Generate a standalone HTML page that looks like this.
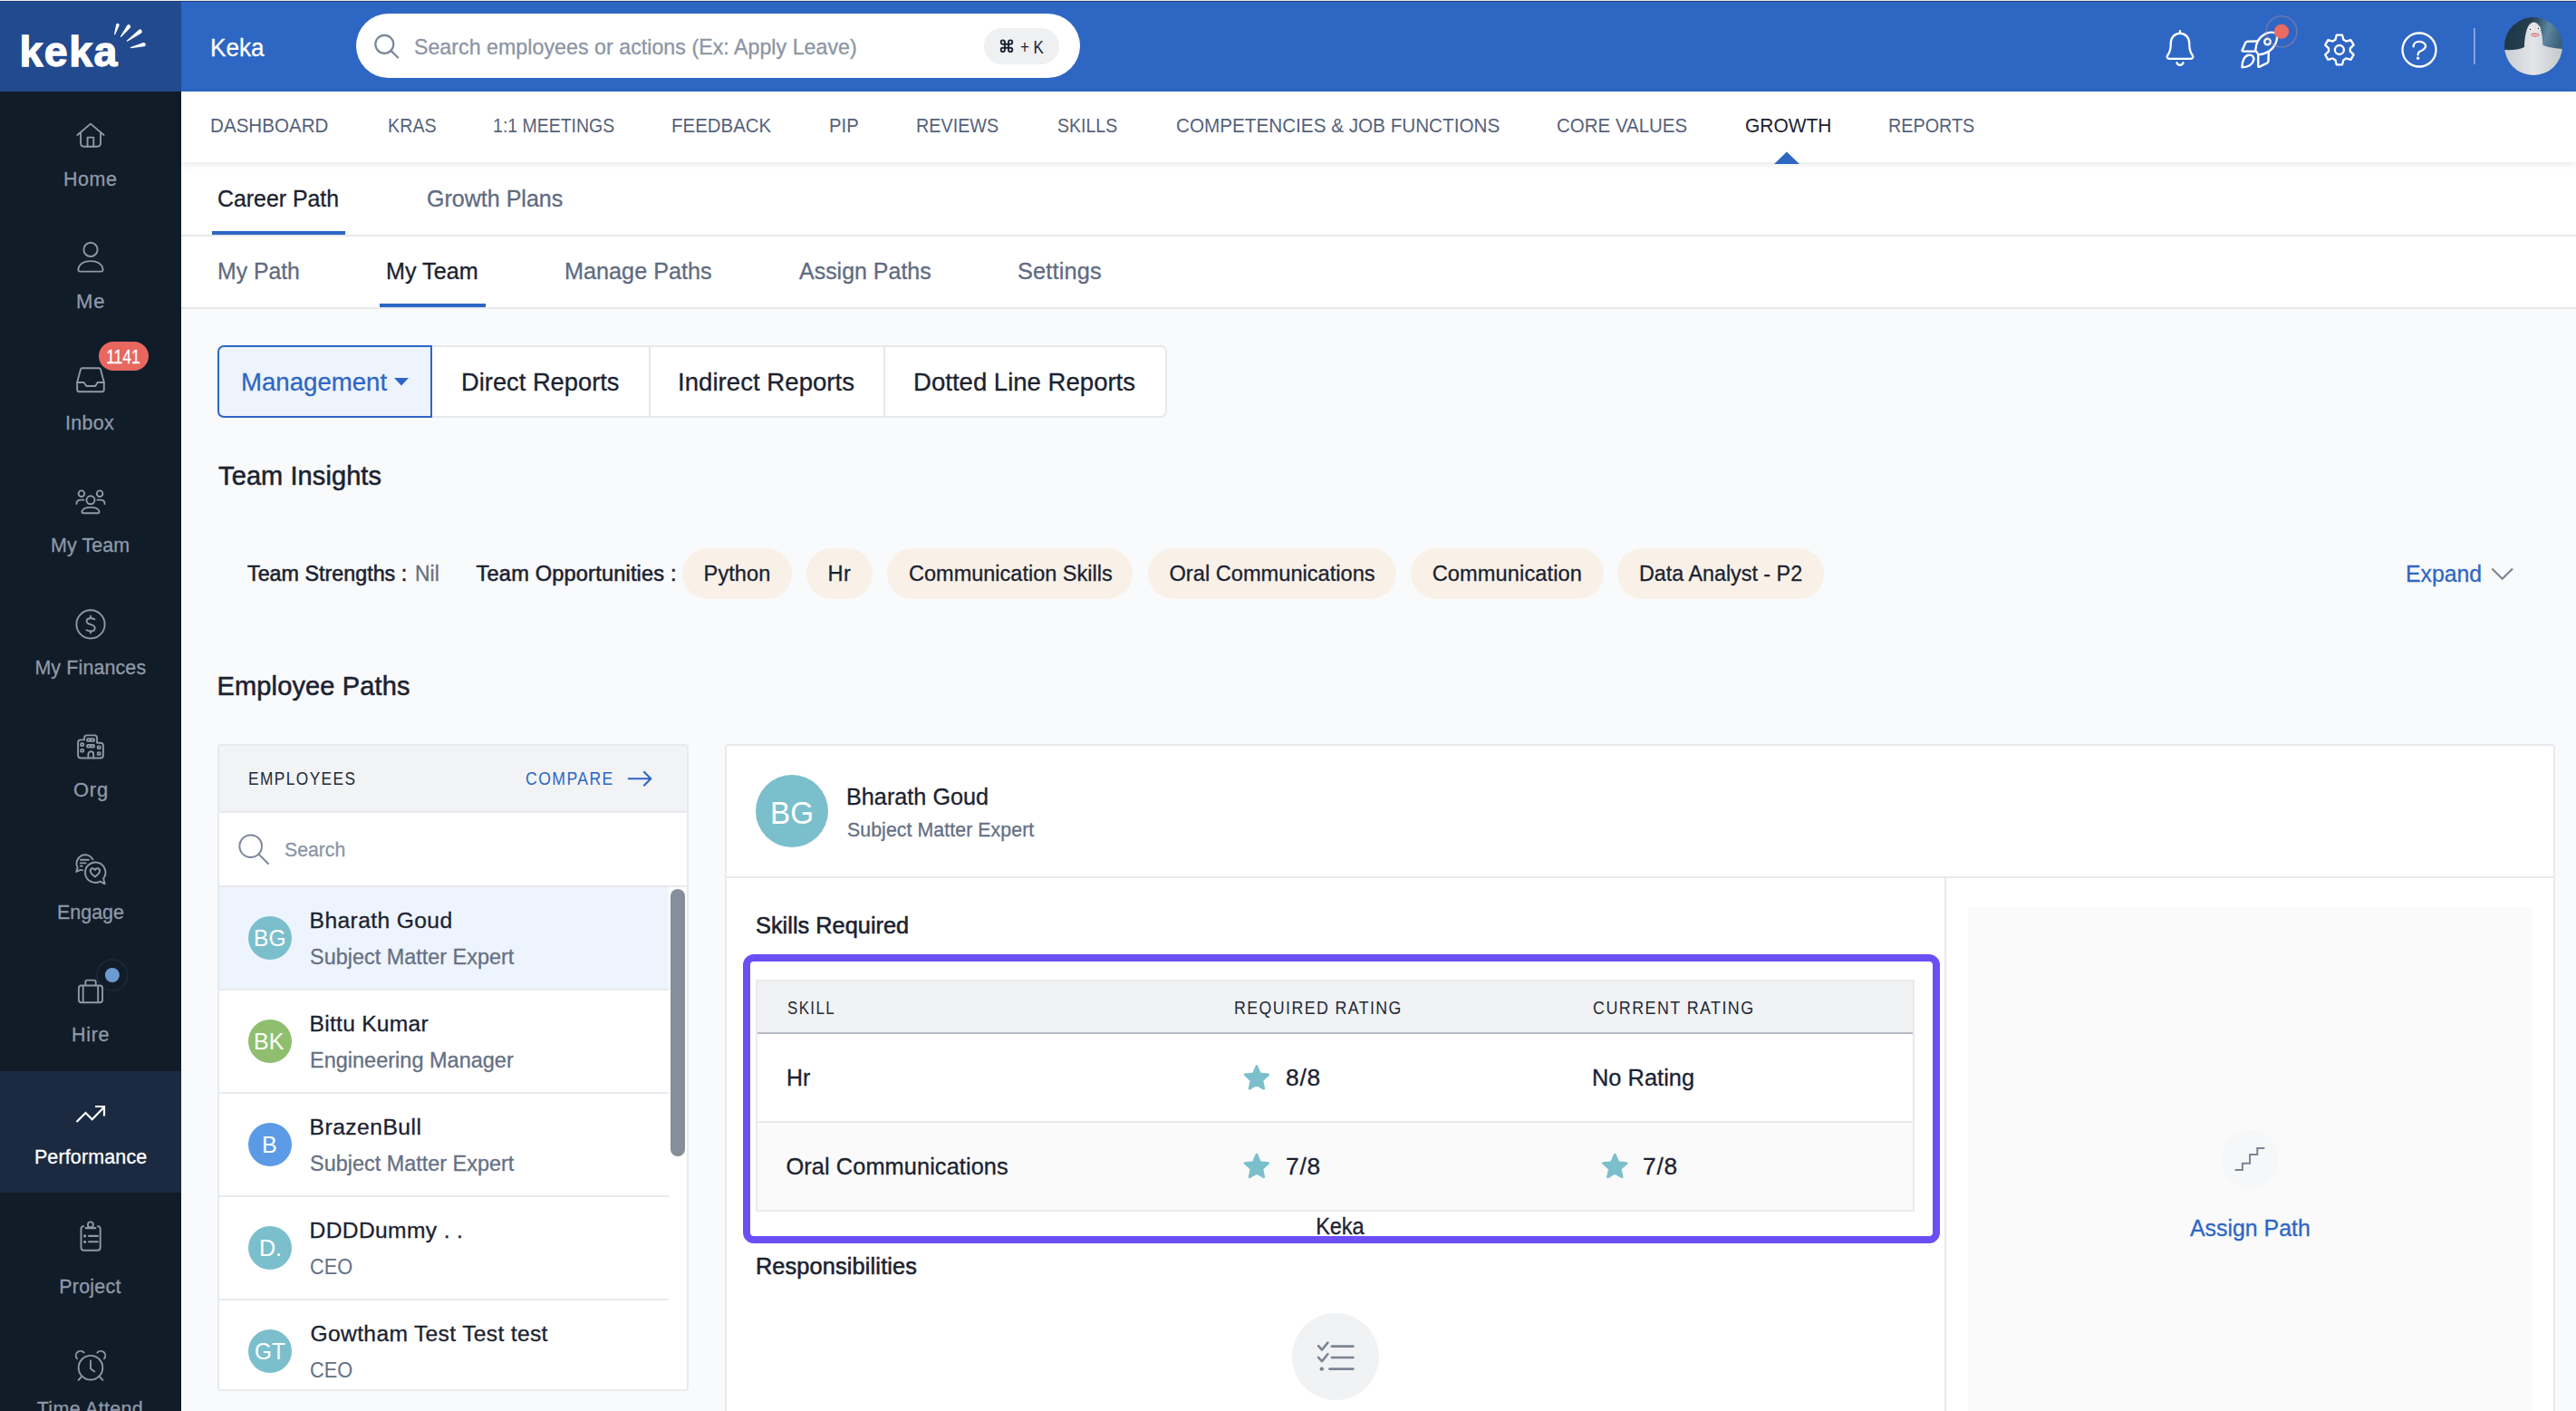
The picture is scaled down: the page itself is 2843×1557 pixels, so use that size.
<!DOCTYPE html>
<html><head><meta charset="utf-8">
<style>
*{box-sizing:border-box;margin:0;padding:0}
html,body{width:2843px;height:1557px;overflow:hidden;background:#f9fafb;font-family:"Liberation Sans",sans-serif;position:relative}
.a{position:absolute}
.t{position:absolute;white-space:nowrap;font-family:"Liberation Sans",sans-serif;-webkit-text-stroke:0.3px currentColor}
.sb{-webkit-text-stroke:0.55px currentColor}
.ns{-webkit-text-stroke:0}
svg{position:absolute;overflow:visible}
</style></head><body>
<!-- top bar -->
<div class="a" style="left:0;top:0;width:200px;height:101px;background:#214a8f"></div>
<div class="a" style="left:200px;top:0;width:2643px;height:101px;background:#2e66c4"></div>
<div class="a" style="left:0;top:0;width:2843px;height:1px;background:#eeece6"></div>
<div class="a" style="left:0;top:1px;width:2843px;height:1px;background:#163d84"></div>
<div class="a" style="left:393px;top:15px;width:799px;height:71px;background:#fff;border-radius:36px"></div>
<div class="a" style="left:1086px;top:31px;width:83px;height:40px;background:#eff0f2;border-radius:20px"></div>
<!-- sidebar -->
<div class="a" style="left:0;top:101px;width:200px;height:1456px;background:#111c29"></div>
<div class="a" style="left:0;top:1182px;width:200px;height:134px;background:#1b2a40"></div>
<!-- nav -->
<div class="a" style="left:200px;top:179px;width:2643px;height:162px;background:#fff"></div>
<div class="a" style="left:200px;top:101px;width:2643px;height:78px;background:#fff;box-shadow:0 2px 8px rgba(0,0,0,0.10)"></div>
<div class="a" style="left:200px;top:259px;width:2643px;height:2px;background:#e7e9ec"></div>
<div class="a" style="left:200px;top:339px;width:2643px;height:2px;background:#e7e9ec"></div>
<div class="a" style="left:234px;top:255px;width:147px;height:4px;background:#2e66c4"></div>
<div class="a" style="left:419px;top:335px;width:117px;height:4px;background:#2e66c4"></div>
<svg style="left:1958px;top:167px" width="28" height="14"><path d="M0 14 L14 0.5 L28 14Z" fill="#2e66c4"/></svg>
<!-- button group -->
<div class="a" style="left:240px;top:381px;width:1048px;height:80px;background:#fff;border:2px solid #e6e8eb;border-radius:7px"></div>
<div class="a" style="left:716px;top:383px;width:2px;height:76px;background:#e6e8eb"></div>
<div class="a" style="left:975px;top:383px;width:2px;height:76px;background:#e6e8eb"></div>
<div class="a" style="left:240px;top:381px;width:237px;height:80px;background:#eef4fc;border:2px solid #2e66c4;border-radius:7px 0 0 7px"></div>
<svg style="left:435px;top:417px" width="16" height="9"><path d="M0 0 L16 0 L8 8.5Z" fill="#2e66c4"/></svg>
<!-- pills -->
<div class="a" style="left:753px;top:605px;width:121px;height:56px;background:#f9f1e8;border-radius:28px"></div>
<div class="a" style="left:890px;top:605px;width:73px;height:56px;background:#f9f1e8;border-radius:28px"></div>
<div class="a" style="left:979px;top:605px;width:271px;height:56px;background:#f9f1e8;border-radius:28px"></div>
<div class="a" style="left:1267px;top:605px;width:274px;height:56px;background:#f9f1e8;border-radius:28px"></div>
<div class="a" style="left:1557px;top:605px;width:213px;height:56px;background:#f9f1e8;border-radius:28px"></div>
<div class="a" style="left:1785px;top:605px;width:228px;height:56px;background:#f9f1e8;border-radius:28px"></div>
<svg style="left:2749px;top:625px" width="26" height="16"><path d="M1.3 2.5 L12.7 13.7 L24 2.5" fill="none" stroke="#7a8494" stroke-width="2.2"/></svg>
<!-- employees panel -->
<div class="a" style="left:240px;top:821px;width:520px;height:714px;background:#fff;border:2px solid #e8eaed;border-radius:4px;overflow:hidden">
  <div class="a" style="left:0;top:0;width:516px;height:74px;background:#f2f3f5;border-bottom:2px solid #e8eaed"></div>
  <div class="a" style="left:0;top:154px;width:516px;height:2px;background:#e8eaed"></div>
  <div class="a" style="left:0;top:156px;width:496px;height:112px;background:#eef4fd"></div>
  <div class="a" style="left:0;top:268px;width:496px;height:2px;background:#e8eaed"></div>
  <div class="a" style="left:0;top:382px;width:496px;height:2px;background:#e8eaed"></div>
  <div class="a" style="left:0;top:496px;width:496px;height:2px;background:#e8eaed"></div>
  <div class="a" style="left:0;top:610px;width:496px;height:2px;background:#e8eaed"></div>
  <div class="a" style="left:498px;top:158px;width:16px;height:295px;background:#868e9a;border-radius:8px"></div>
</div>
<div class="a" style="left:274px;top:1011px;width:48px;height:48px;border-radius:50%;background:#7bbfcc"></div>
<div class="a" style="left:274px;top:1125px;width:48px;height:48px;border-radius:50%;background:#8fbf6e"></div>
<div class="a" style="left:274px;top:1239px;width:48px;height:48px;border-radius:50%;background:#5b9be6"></div>
<div class="a" style="left:274px;top:1353px;width:48px;height:48px;border-radius:50%;background:#7bbfcc"></div>
<div class="a" style="left:274px;top:1467px;width:48px;height:48px;border-radius:50%;background:#7bbfcc"></div>
<!-- detail panel -->
<div class="a" style="left:800px;top:821px;width:2020px;height:760px;background:#fff;border:2px solid #e8eaed;border-radius:4px"></div>
<div class="a" style="left:802px;top:967px;width:2016px;height:2px;background:#e8eaed"></div>
<div class="a" style="left:2146px;top:969px;width:2px;height:600px;background:#e8eaed"></div>
<div class="a" style="left:2172px;top:1001px;width:622px;height:600px;background:#fafafb"></div>
<div class="a" style="left:2451px;top:1247px;width:64px;height:64px;border-radius:50%;background:#f6f7f9"></div>
<div class="a" style="left:834px;top:855px;width:80px;height:80px;border-radius:50%;background:#7bbfcc"></div>
<!-- table -->
<div class="a" style="left:834px;top:1081px;width:1279px;height:256px;background:#fff;border:2px solid #e8eaed"></div>
<div class="a" style="left:836px;top:1083px;width:1275px;height:58px;background:#f1f2f4;border-bottom:2px solid #b5bac4"></div>
<div class="a" style="left:836px;top:1237px;width:1275px;height:2px;background:#e8eaed"></div>
<div class="a" style="left:836px;top:1239px;width:1275px;height:96px;background:#fafafb"></div>
<div class="a" style="left:820px;top:1053px;width:1321px;height:319px;border:8px solid #6b4ff5;border-radius:12px"></div>
<div class="a" style="left:1426px;top:1449px;width:96px;height:96px;border-radius:50%;background:#f1f2f4"></div>
<svg style="left:0;top:0" width="2843" height="1557" viewBox="0 0 2843 1557">
<!-- logo swooshes -->
<g fill="#fff">
<path d="M127.17 38.08 L131.61 28.15 A1.80 1.80 0 0 0 128.19 27.05 L126.03 37.72 A0.60 0.60 0 0 0 127.17 38.08Z"/>
<path d="M133.87 40.67 L143.73 30.66 A2.20 2.20 0 0 0 140.27 27.94 L132.93 39.93 A0.60 0.60 0 0 0 133.87 40.67Z"/>
<path d="M140.65 45.68 L155.86 36.66 A2.30 2.30 0 0 0 153.14 32.94 L139.95 44.72 A0.60 0.60 0 0 0 140.65 45.68Z"/>
<path d="M144.44 53.18 L159.11 51.34 A2.20 2.20 0 0 0 158.09 47.06 L144.16 52.02 A0.60 0.60 0 0 0 144.44 53.18Z"/>
</g>
<!-- top search icon -->
<g fill="none" stroke="#7d8797" stroke-width="2.2" stroke-linecap="round">
<circle cx="424.3" cy="48.8" r="10"/>
<path d="M431.6 56.1 L439.2 63.5"/>
</g>
<!-- cmd symbol -->
<path d="M1106.85 48.7 H1115.15 M1106.85 52.8 H1115.15 M1109.0 46.550000000000004 V54.949999999999996 M1113.0 46.550000000000004 V54.949999999999996 M1109.0 46.550000000000004 A2.15 2.15 0 1 0 1106.85 48.7 M1113.0 46.550000000000004 A2.15 2.15 0 1 1 1115.15 48.7 M1109.0 54.949999999999996 A2.15 2.15 0 1 1 1106.85 52.8 M1113.0 54.949999999999996 A2.15 2.15 0 1 0 1115.15 52.8" fill="none" stroke="#1b2230" stroke-width="1.9"/>
<!-- bell -->
<g fill="none" stroke="#fff" stroke-width="2.3" stroke-linejoin="round" stroke-linecap="round" transform="translate(0 0.7)">
<path d="M2406 33.5 V36.2"/>
<path d="M2394.5 64.2 H2417.5 C2420.2 64.2 2421.2 62 2419.6 60 C2417 56.8 2416.2 53.5 2416.2 47 C2416.2 40.5 2411.8 36.2 2406 36.2 C2400.2 36.2 2395.8 40.5 2395.8 47 C2395.8 53.5 2395 56.8 2392.4 60 C2390.8 62 2391.8 64.2 2394.5 64.2Z"/>
<path d="M2402.5 68.5 C2404 72 2408 72 2409.5 68.5"/>
</g>
<!-- rocket -->
<g transform="translate(2465 15)" fill="none" stroke="#fff" stroke-width="2.4" stroke-linejoin="round" stroke-linecap="round">
<path d="M24.2 40.6 C24.6 33 28.2 26.2 34.6 22.6 C39 20.3 44 20.1 47.6 22.2 C48.9 26.6 47.6 33 43.6 37.6 C40.2 41.6 34.2 44.6 27.6 45.4 L24.2 40.6Z"/>
<circle cx="37.5" cy="31.1" r="3.3"/>
<path d="M25.6 30.5 L15.6 30.7 Q13.9 30.9 13.1 32.4 L9.6 40.4 Q9.4 41.5 10.6 41.5 L22.6 41.7"/>
<path d="M38.8 42.6 L38.5 52.4 Q38.3 53.9 37 54.6 L28.4 58.8 Q27.3 59.2 27.3 58 L27.2 45.6"/>
<path d="M9.5 59.2 C9.4 52.8 11.8 46.6 16.6 45.7 C20.6 45 23.2 48 22.2 51.5 C20.7 56.8 15.3 59.2 9.5 59.2Z"/>
</g>
<circle cx="2518" cy="34.8" r="17" fill="none" stroke="#b8899a" stroke-opacity="0.45" stroke-width="1.6"/>
<circle cx="2518" cy="34.8" r="8.1" fill="#e96b63"/>
<!-- gear -->
<g fill="none" stroke="#fff" stroke-width="2.3" stroke-linejoin="round">
<path d="M2577.40 43.87 L2578.73 38.70 L2585.07 38.70 L2586.40 43.87 L2589.29 45.54 L2594.43 44.11 L2597.60 49.60 L2593.78 53.33 L2593.78 56.67 L2597.60 60.40 L2594.43 65.89 L2589.29 64.46 L2586.40 66.13 L2585.07 71.30 L2578.73 71.30 L2577.40 66.13 L2574.51 64.46 L2569.37 65.89 L2566.20 60.40 L2570.02 56.67 L2570.02 53.33 L2566.20 49.60 L2569.37 44.11 L2574.51 45.54Z"/>
<circle cx="2581.9" cy="55" r="5"/>
</g>
<!-- help -->
<g fill="none" stroke="#fff" stroke-width="2.3" stroke-linecap="round">
<circle cx="2670" cy="55" r="18.5"/>
<path d="M2663.6 51.4 C2663.6 47.9 2666.5 45.8 2670 45.8 C2674 45.8 2677 48.2 2677 51 C2677 54.4 2673.2 55.5 2670.6 56.8 C2669.1 57.6 2668.6 58.6 2668.6 60.4"/>
</g>
<circle cx="2668.6" cy="64.2" r="1.7" fill="#fff"/>
<rect x="2730" y="31" width="1.6" height="40" fill="#fff" fill-opacity="0.5"/>
<!-- sidebar icons -->
<g fill="none" stroke="#8e98a7" stroke-width="1.9" stroke-linejoin="round" stroke-linecap="round">
<!-- home -->
<path d="M85.4 149 L100 136.6 L114.6 149"/>
<path d="M89.1 146.6 V158 Q89.1 161.7 92.8 161.7 H107.3 Q111 161.7 111 158 V146.6"/>
<path d="M96.6 161.7 V151.6 H103.3 V161.7"/>
<!-- me -->
<circle cx="100" cy="275.4" r="7.6"/>
<path d="M88.5 299.6 H111.5 Q114 299.6 113.6 297 C112.6 291.7 107.8 288.1 100 288.1 C92.2 288.1 87.4 291.7 86.4 297 Q86 299.6 88.5 299.6Z"/>
<!-- inbox -->
<path d="M85.2 421.8 L89 407.6 Q89.4 406.2 90.8 406.2 H109.2 Q110.6 406.2 111 407.6 L114.8 421.8 V430 Q114.8 432.3 112.5 432.3 H87.5 Q85.2 432.3 85.2 430 Z"/>
<path d="M85.2 422 H92.6 L95.3 426 H105.3 L107.6 422 H114.8"/>
<!-- my team -->
<circle cx="100" cy="551.8" r="4.5"/>
<path d="M92.3 566.2 H107.7 Q109.9 566.2 109.5 564.3 C108.8 561.4 105.5 559.9 100 559.9 C94.5 559.9 91.2 561.4 90.5 564.3 Q90.1 566.2 92.3 566.2Z"/>
<circle cx="89.9" cy="544.7" r="3.3"/>
<circle cx="110.1" cy="544.7" r="3.3"/>
<path d="M92.6 551.6 H89.4 C86.2 551.6 84.4 553.4 84.4 556"/>
<path d="M107.4 551.6 H110.6 C113.8 551.6 115.6 553.4 115.6 556"/>
<!-- finances -->
<circle cx="100" cy="688.9" r="15.6"/>
<path d="M104.3 683.4 C103.1 682.6 101.7 682.3 100.2 682.3 C97.5 682.3 95.6 683.7 95.6 685.8 C95.6 690.1 104.7 688 104.7 692.9 C104.7 695.2 102.8 696.5 100 696.5 C98.2 696.5 96.7 696 95.5 695.2"/>
<path d="M100 679.6 V682.3 M100 696.5 V698.6"/>
<!-- org -->
<path d="M86.1 819.5 Q86.1 816.4 89.2 816.4 H93 V814.4 Q93 811.4 96.1 811.4 H104 Q107.1 811.4 107.1 814.4 V819.8 H110.8 Q113.9 819.8 113.9 822.9 V833.4 Q113.9 836.5 110.8 836.5 H89.2 Q86.1 836.5 86.1 833.4 Z"/>
<path d="M97.4 836.4 V832.2 A2.9 2.9 0 0 1 103.2 832.2 V836.4"/>
</g>
<g fill="#8e98a7">
<rect x="88.3" y="819.3" width="4.8" height="4.6" rx="1.6"/>
<rect x="88.3" y="826" width="4.8" height="4.6" rx="1.6"/>
<rect x="95.2" y="814.2" width="9.7" height="4.6" rx="1.6"/>
<rect x="95.2" y="820.9" width="9.7" height="4.6" rx="1.6"/>
<rect x="106.8" y="822.5" width="4.8" height="4.6" rx="1.6"/>
<rect x="106.8" y="829.2" width="4.8" height="4.6" rx="1.6"/>
</g>
<g fill="#111c29">
<circle cx="90.7" cy="821.6" r="0.7"/><circle cx="90.7" cy="828.3" r="0.7"/>
<circle cx="98" cy="816.5" r="0.7"/><circle cx="102" cy="816.5" r="0.7"/>
<circle cx="98" cy="823.2" r="0.7"/><circle cx="102" cy="823.2" r="0.7"/>
<circle cx="109.2" cy="824.8" r="0.7"/><circle cx="109.2" cy="831.5" r="0.7"/>
</g>
<circle cx="123.9" cy="1076" r="17" fill="none" stroke="#1a293b" stroke-width="1.6"/>
<g fill="none" stroke="#8e98a7" stroke-width="1.9" stroke-linejoin="round" stroke-linecap="round">
<!-- engage -->
<path d="M102.4 948.3 A9.4 9.4 0 0 0 85.6 957.4 L84.2 962 L88.8 959.9 L91.2 960.4"/>
<path d="M88.9 948.8 H97.8 M88.8 952.4 H94.6 M88.8 955.6 H90.8"/>
<path d="M110.5 972.6 A11.2 11.2 0 1 1 114.2 969.4 L115.6 975.4 Z"/>
<path d="M104.9 967.6 C102.3 965.7 99.7 963.6 99.7 961.1 C99.7 959.2 101 958.3 102.3 958.3 C103.6 958.3 104.4 959.2 104.9 960 C105.4 959.2 106.2 958.3 107.5 958.3 C108.8 958.3 110.1 959.2 110.1 961.1 C110.1 963.6 107.5 965.7 104.9 967.6Z"/>
<!-- hire -->
<rect x="86.9" y="1087.5" width="26.2" height="18.8" rx="3"/>
<path d="M94.3 1087.2 V1083.6 Q94.3 1081.6 96.3 1081.6 H103.7 Q105.7 1081.6 105.7 1083.6 V1087.2"/>
<path d="M91.7 1088 V1106 M108.2 1088 V1106"/>
</g>
<circle cx="123.9" cy="1076" r="8" fill="#6b9bd0"/>
<!-- performance -->
<path d="M84.5 1238 L94.5 1228 L101.7 1235.2 L115 1221.6 M105.1 1221 H115 V1231.4" fill="none" stroke="#fff" stroke-width="2.2" stroke-linejoin="miter"/>
<g fill="none" stroke="#8e98a7" stroke-width="1.9" stroke-linejoin="round" stroke-linecap="round">
<!-- project -->
<path d="M92.3 1353.1 H92 Q89.5 1353.1 89.5 1356 V1376.5 Q89.5 1379.8 92.8 1379.8 H107.4 Q110.7 1379.8 110.7 1376.5 V1356 Q110.7 1353.1 108 1353.1 H107.8"/>
<circle cx="99.9" cy="1351.4" r="3"/>
<path d="M94.6 1355.1 H105.4" stroke-width="2.1"/>
<path d="M98.1 1363.9 H107.9 M98.1 1370.3 H107.9" stroke-width="2.1"/>
<!-- time -->
<circle cx="100" cy="1509.2" r="13.3"/>
<path d="M100 1501.4 V1510.2 L104.2 1513.4"/>
<path d="M85 1499.2 A5 5 0 0 1 92.7 1492.6"/>
<path d="M115 1499.2 A5 5 0 0 0 107.3 1492.6"/>
<path d="M86.6 1522.8 L89.7 1519.5 M113.4 1522.8 L110.3 1519.5"/>
</g>
<g fill="#8e98a7"><circle cx="93.6" cy="1363.9" r="1.6"/><circle cx="93.6" cy="1370.3" r="1.6"/></g>
<!-- employees search icon -->
<g fill="none" stroke="#7d8797" stroke-width="2" stroke-linecap="round">
<circle cx="276.7" cy="933.7" r="12.3"/>
<path d="M285.6 942.6 L296 953"/>
</g>
<!-- compare arrow -->
<path d="M692.9 859.2 H718 M710.3 851.2 L718.3 859.2 L710.3 867.2" fill="none" stroke="#2e66c4" stroke-width="2.1" stroke-linecap="butt" stroke-linejoin="miter"/>
<!-- stars -->
<g fill="#7bbfcc" stroke="#7bbfcc" stroke-width="2.6" stroke-linejoin="round">
<path transform="translate(1371.9 1174)" d="M15.00 2.40 L18.70 10.90 L27.90 11.90 L21.00 18.20 L22.90 27.30 L15.00 22.70 L7.10 27.30 L9.00 18.20 L2.10 11.90 L11.30 10.90Z"/>
<path transform="translate(1371.9 1271.6)" d="M15.00 2.40 L18.70 10.90 L27.90 11.90 L21.00 18.20 L22.90 27.30 L15.00 22.70 L7.10 27.30 L9.00 18.20 L2.10 11.90 L11.30 10.90Z"/>
<path transform="translate(1767.3 1271.6)" d="M15.00 2.40 L18.70 10.90 L27.90 11.90 L21.00 18.20 L22.90 27.30 L15.00 22.70 L7.10 27.30 L9.00 18.20 L2.10 11.90 L11.30 10.90Z"/>
</g>
<!-- stairs -->
<path d="M2466.7 1291 H2474.9 V1283.7 H2483.1 V1274 H2491.3 V1266.9 H2499.3" fill="none" stroke="#7a8494" stroke-width="2" stroke-linecap="butt"/>
<!-- list -->
<g fill="none" stroke="#7a8494" stroke-width="2.6" stroke-linecap="round" stroke-linejoin="round">
<path d="M1455 1485.2 L1459 1489.5 L1465.4 1481.6"/>
<path d="M1455 1497.8 L1459 1502.1 L1465.4 1494.2"/>
<path d="M1469.8 1485.6 H1493.4 M1469.8 1498 H1493.4 M1467.4 1510.6 H1493.4"/>
</g>
<circle cx="1458.8" cy="1510.6" r="2.2" fill="#7a8494"/>
</svg>
<!-- avatar -->
<svg style="left:2764px;top:19px" width="64" height="64" viewBox="2764 19 64 64">
<defs><clipPath id="avc"><circle cx="2796" cy="51" r="32"/></clipPath>
<linearGradient id="avbg" x1="0" y1="0" x2="1" y2="0.3"><stop offset="0" stop-color="#1d3443"/><stop offset="0.45" stop-color="#24404f"/><stop offset="0.75" stop-color="#5d86a0"/><stop offset="1" stop-color="#3b6076"/></linearGradient>
<linearGradient id="avgh" x1="0" y1="0" x2="1" y2="0"><stop offset="0" stop-color="#c9cdd1"/><stop offset="0.5" stop-color="#e3e5e8"/><stop offset="1" stop-color="#c3c8cc"/></linearGradient></defs>
<g clip-path="url(#avc)">
<rect x="2764" y="19" width="64" height="64" fill="url(#avbg)"/>
<path d="M2786 52 C2786.5 38 2789 25 2796.5 24.5 C2804 25 2806 38 2806.5 50 C2814 53 2822 53.5 2829 54 L2829 84 L2763 84 L2763 55 C2772 55.5 2780 55 2786 52Z" fill="url(#avgh)"/>
<circle cx="2792.7" cy="32.1" r="2.1" fill="#fff"/><circle cx="2801.6" cy="31.1" r="2.1" fill="#fff"/>
<circle cx="2792.5" cy="32.4" r="0.8" fill="#222"/><circle cx="2801.4" cy="31.4" r="0.8" fill="#222"/>
<ellipse cx="2797.8" cy="38.6" rx="4.5" ry="2.2" fill="#c97d80"/>
<rect x="2794.5" y="38.2" width="6.6" height="1.2" fill="#f3e6e6"/>
</g>
</svg>
<!-- logo text -->
<div class="t" style="left:21.5px;top:34px;font-size:46.5px;line-height:46.5px;font-weight:700;color:#fff;letter-spacing:1.5px;-webkit-text-stroke:1.3px #fff">keka</div>
<!-- badge -->
<div class="a" style="left:109px;top:377px;width:55px;height:32px;border-radius:16px;background:#e8675f"></div>

<div class="t" style="left:231.7px;top:39.5px;font-size:26.81px;line-height:26.81px;letter-spacing:0.000px;transform:scaleX(0.9751);transform-origin:2.0px 0;color:#ffffff;">Keka</div>
<div class="t" style="left:456.9px;top:41.1px;font-size:23.19px;line-height:23.19px;letter-spacing:0.038px;color:#8c95a5;">Search employees or actions (Ex: Apply Leave)</div>
<div class="t ns" style="left:1126.0px;top:41.7px;font-size:20.29px;line-height:20.29px;letter-spacing:0.000px;transform:scaleX(0.8327);transform-origin:0.0px 0;color:#1b2230;">+ K</div>
<div class="t ns" style="left:232.4px;top:128.9px;font-size:21.30px;line-height:21.30px;letter-spacing:0.000px;transform:scaleX(0.9669);transform-origin:1.0px 0;color:#56627a;">DASHBOARD</div>
<div class="t ns" style="left:427.9px;top:128.9px;font-size:21.30px;line-height:21.30px;letter-spacing:0.000px;transform:scaleX(0.9227);transform-origin:1.0px 0;color:#56627a;">KRAS</div>
<div class="t ns" style="left:544.0px;top:128.9px;font-size:21.30px;line-height:21.30px;letter-spacing:0.000px;transform:scaleX(0.9138);transform-origin:1.0px 0;color:#56627a;">1:1 MEETINGS</div>
<div class="t ns" style="left:741.0px;top:128.9px;font-size:21.30px;line-height:21.30px;letter-spacing:0.000px;transform:scaleX(0.9596);transform-origin:1.0px 0;color:#56627a;">FEEDBACK</div>
<div class="t ns" style="left:914.5px;top:128.9px;font-size:21.30px;line-height:21.30px;letter-spacing:0.000px;transform:scaleX(0.9510);transform-origin:1.0px 0;color:#56627a;">PIP</div>
<div class="t ns" style="left:1011.0px;top:128.9px;font-size:21.30px;line-height:21.30px;letter-spacing:0.000px;transform:scaleX(0.9277);transform-origin:1.0px 0;color:#56627a;">REVIEWS</div>
<div class="t ns" style="left:1167.0px;top:128.9px;font-size:21.30px;line-height:21.30px;letter-spacing:0.000px;transform:scaleX(0.9165);transform-origin:0.0px 0;color:#56627a;">SKILLS</div>
<div class="t ns" style="left:1298.0px;top:128.9px;font-size:21.30px;line-height:21.30px;letter-spacing:0.000px;transform:scaleX(0.9706);transform-origin:1.0px 0;color:#56627a;">COMPETENCIES &amp; JOB FUNCTIONS</div>
<div class="t ns" style="left:1718.0px;top:128.9px;font-size:21.30px;line-height:21.30px;letter-spacing:0.000px;transform:scaleX(0.9616);transform-origin:1.0px 0;color:#56627a;">CORE VALUES</div>
<div class="t ns" style="left:1926.0px;top:128.9px;font-size:21.30px;line-height:21.30px;letter-spacing:0.000px;transform:scaleX(0.9829);transform-origin:1.0px 0;color:#1b2230;">GROWTH</div>
<div class="t ns" style="left:2084.0px;top:128.9px;font-size:21.30px;line-height:21.30px;letter-spacing:0.000px;transform:scaleX(0.9274);transform-origin:1.0px 0;color:#56627a;">REPORTS</div>
<div class="t" style="left:240.2px;top:207.1px;font-size:25.36px;line-height:25.36px;letter-spacing:0.000px;transform:scaleX(0.9805);transform-origin:1.0px 0;color:#1b2230;">Career Path</div>
<div class="t" style="left:470.9px;top:207.1px;font-size:25.36px;line-height:25.36px;letter-spacing:0.000px;transform:scaleX(0.9871);transform-origin:1.0px 0;color:#5f6b80;">Growth Plans</div>
<div class="t" style="left:239.6px;top:287.1px;font-size:25.36px;line-height:25.36px;letter-spacing:0.000px;transform:scaleX(0.9765);transform-origin:2.0px 0;color:#5f6b80;">My Path</div>
<div class="t" style="left:426.4px;top:287.1px;font-size:25.36px;line-height:25.36px;letter-spacing:0.000px;transform:scaleX(0.9926);transform-origin:2.0px 0;color:#1b2230;">My Team</div>
<div class="t" style="left:623.0px;top:287.1px;font-size:25.36px;line-height:25.36px;letter-spacing:0.000px;transform:scaleX(0.9947);transform-origin:2.0px 0;color:#5f6b80;">Manage Paths</div>
<div class="t" style="left:882.0px;top:287.1px;font-size:25.36px;line-height:25.36px;letter-spacing:0.000px;transform:scaleX(0.9842);transform-origin:0.0px 0;color:#5f6b80;">Assign Paths</div>
<div class="t" style="left:1123.0px;top:287.1px;font-size:25.36px;line-height:25.36px;letter-spacing:0.150px;color:#5f6b80;">Settings</div>
<div class="t" style="left:265.8px;top:408.4px;font-size:28.12px;line-height:28.12px;letter-spacing:0.000px;transform:scaleX(0.9817);transform-origin:2.0px 0;color:#2e66c4;">Management</div>
<div class="t" style="left:508.6px;top:408.4px;font-size:28.12px;line-height:28.12px;letter-spacing:0.000px;transform:scaleX(0.9708);transform-origin:2.0px 0;color:#1b2230;">Direct Reports</div>
<div class="t" style="left:748.0px;top:408.4px;font-size:28.12px;line-height:28.12px;letter-spacing:0.000px;transform:scaleX(0.9829);transform-origin:2.0px 0;color:#1b2230;">Indirect Reports</div>
<div class="t" style="left:1008.0px;top:408.4px;font-size:28.12px;line-height:28.12px;letter-spacing:0.000px;transform:scaleX(0.9800);transform-origin:2.0px 0;color:#1b2230;">Dotted Line Reports</div>
<div class="t sb" style="left:241.1px;top:511.1px;font-size:28.99px;line-height:28.99px;letter-spacing:0.089px;color:#1b2230;">Team Insights</div>
<div class="t sb" style="left:272.9px;top:622.1px;font-size:23.62px;line-height:23.62px;letter-spacing:0.000px;transform:scaleX(0.9875);transform-origin:0.0px 0;color:#1b2230;">Team Strengths :</div>
<div class="t" style="left:457.5px;top:622.1px;font-size:23.62px;line-height:23.62px;letter-spacing:0.000px;transform:scaleX(0.9686);transform-origin:1.0px 0;color:#657084;">Nil</div>
<div class="t sb" style="left:525.6px;top:622.1px;font-size:23.62px;line-height:23.62px;letter-spacing:0.165px;color:#1b2230;">Team Opportunities :</div>
<div class="t" style="left:776.6px;top:622.1px;font-size:23.62px;line-height:23.62px;letter-spacing:0.046px;color:#1b2230;">Python</div>
<div class="t" style="left:913.5px;top:622.1px;font-size:23.62px;line-height:23.62px;letter-spacing:0.450px;color:#1b2230;">Hr</div>
<div class="t" style="left:1002.6px;top:622.1px;font-size:23.62px;line-height:23.62px;letter-spacing:0.000px;transform:scaleX(0.9957);transform-origin:1.0px 0;color:#1b2230;">Communication Skills</div>
<div class="t" style="left:1290.5px;top:622.1px;font-size:23.62px;line-height:23.62px;letter-spacing:0.007px;color:#1b2230;">Oral Communications</div>
<div class="t" style="left:1580.7px;top:622.1px;font-size:23.62px;line-height:23.62px;letter-spacing:0.101px;color:#1b2230;">Communication</div>
<div class="t" style="left:1808.7px;top:622.1px;font-size:23.62px;line-height:23.62px;letter-spacing:0.000px;transform:scaleX(0.9874);transform-origin:1.0px 0;color:#1b2230;">Data Analyst - P2</div>
<div class="t" style="left:2654.9px;top:621.1px;font-size:25.07px;line-height:25.07px;letter-spacing:0.000px;transform:scaleX(0.9895);transform-origin:2.0px 0;color:#2e66c4;">Expand</div>
<div class="t sb" style="left:239.6px;top:743.0px;font-size:28.99px;line-height:28.99px;letter-spacing:0.134px;color:#1b2230;">Employee Paths</div>
<div class="t ns" style="left:273.8px;top:850.1px;font-size:19.42px;line-height:19.42px;letter-spacing:1.600px;transform:scaleX(0.8892);transform-origin:1.0px 0;color:#222a38;">EMPLOYEES</div>
<div class="t ns" style="left:580.2px;top:850.1px;font-size:19.42px;line-height:19.42px;letter-spacing:1.600px;transform:scaleX(0.9066);transform-origin:0.0px 0;color:#2e66c4;">COMPARE</div>
<div class="t" style="left:313.9px;top:927.4px;font-size:21.88px;line-height:21.88px;letter-spacing:0.000px;transform:scaleX(0.9696);transform-origin:1.0px 0;color:#8c95a5;">Search</div>
<div class="t" style="left:341.6px;top:1003.8px;font-size:24.64px;line-height:24.64px;letter-spacing:0.379px;color:#1b2230;">Bharath Goud</div>
<div class="t" style="left:342.1px;top:1045.3px;font-size:23.62px;line-height:23.62px;letter-spacing:0.000px;transform:scaleX(0.9923);transform-origin:1.0px 0;color:#657084;">Subject Matter Expert</div>
<div class="t" style="left:341.6px;top:1117.8px;font-size:24.64px;line-height:24.64px;letter-spacing:0.246px;color:#1b2230;">Bittu Kumar</div>
<div class="t" style="left:342.1px;top:1159.3px;font-size:23.62px;line-height:23.62px;letter-spacing:0.000px;transform:scaleX(0.9956);transform-origin:1.0px 0;color:#657084;">Engineering Manager</div>
<div class="t" style="left:341.6px;top:1231.8px;font-size:24.64px;line-height:24.64px;letter-spacing:0.465px;color:#1b2230;">BrazenBull</div>
<div class="t" style="left:342.1px;top:1273.3px;font-size:23.62px;line-height:23.62px;letter-spacing:0.000px;transform:scaleX(0.9923);transform-origin:1.0px 0;color:#657084;">Subject Matter Expert</div>
<div class="t" style="left:341.6px;top:1345.8px;font-size:24.64px;line-height:24.64px;letter-spacing:0.337px;color:#1b2230;">DDDDummy . .</div>
<div class="t ns" style="left:342.1px;top:1387.3px;font-size:23.62px;line-height:23.62px;letter-spacing:0.000px;transform:scaleX(0.9217);transform-origin:1.0px 0;color:#657084;">CEO</div>
<div class="t" style="left:342.6px;top:1459.8px;font-size:24.64px;line-height:24.64px;letter-spacing:0.325px;color:#1b2230;">Gowtham Test Test test</div>
<div class="t ns" style="left:342.1px;top:1501.3px;font-size:23.62px;line-height:23.62px;letter-spacing:0.000px;transform:scaleX(0.9217);transform-origin:1.0px 0;color:#657084;">CEO</div>
<div class="t" style="left:934.0px;top:867.0px;font-size:25.36px;line-height:25.36px;letter-spacing:0.000px;transform:scaleX(0.9948);transform-origin:2.0px 0;color:#1b2230;">Bharath Goud</div>
<div class="t" style="left:935.0px;top:905.9px;font-size:21.30px;line-height:21.30px;letter-spacing:0.072px;color:#657084;">Subject Matter Expert</div>
<div class="t sb" style="left:834.0px;top:1008.9px;font-size:25.36px;line-height:25.36px;letter-spacing:0.005px;color:#1b2230;">Skills Required</div>
<div class="t ns" style="left:868.6px;top:1102.7px;font-size:19.86px;line-height:19.86px;letter-spacing:1.600px;transform:scaleX(0.8540);transform-origin:0.0px 0;color:#222a38;">SKILL</div>
<div class="t ns" style="left:1362.0px;top:1102.7px;font-size:19.86px;line-height:19.86px;letter-spacing:1.600px;transform:scaleX(0.8934);transform-origin:1.0px 0;color:#222a38;">REQUIRED RATING</div>
<div class="t ns" style="left:1758.0px;top:1102.7px;font-size:19.86px;line-height:19.86px;letter-spacing:1.600px;transform:scaleX(0.9003);transform-origin:1.0px 0;color:#222a38;">CURRENT RATING</div>
<div class="t" style="left:868.0px;top:1177.0px;font-size:25.36px;line-height:25.36px;letter-spacing:0.000px;transform:scaleX(0.9797);transform-origin:2.0px 0;color:#1b2230;">Hr</div>
<div class="t" style="left:1418.6px;top:1177.0px;font-size:25.36px;line-height:25.36px;letter-spacing:0.800px;transform:scaleX(1.0389);transform-origin:1.0px 0;color:#1b2230;">8/8</div>
<div class="t" style="left:1757.0px;top:1177.0px;font-size:25.36px;line-height:25.36px;letter-spacing:0.042px;color:#1b2230;">No Rating</div>
<div class="t" style="left:867.5px;top:1274.6px;font-size:25.36px;line-height:25.36px;letter-spacing:0.076px;color:#1b2230;">Oral Communications</div>
<div class="t" style="left:1419.0px;top:1274.6px;font-size:25.36px;line-height:25.36px;letter-spacing:0.800px;transform:scaleX(1.0360);transform-origin:1.0px 0;color:#1b2230;">7/8</div>
<div class="t" style="left:1813.0px;top:1274.6px;font-size:25.36px;line-height:25.36px;letter-spacing:0.800px;transform:scaleX(1.0360);transform-origin:1.0px 0;color:#1b2230;">7/8</div>
<div class="t" style="left:1452.0px;top:1341.1px;font-size:25.22px;line-height:25.22px;letter-spacing:0.000px;transform:scaleX(0.9304);transform-origin:2.0px 0;color:#1b2230;">Keka</div>
<div class="t sb" style="left:833.9px;top:1384.9px;font-size:25.36px;line-height:25.36px;letter-spacing:0.126px;color:#1b2230;">Responsibilities</div>
<div class="t" style="left:2416.5px;top:1343.0px;font-size:25.36px;line-height:25.36px;letter-spacing:0.000px;transform:scaleX(0.9812);transform-origin:0.0px 0;color:#2e66c4;">Assign Path</div>
<div class="t" style="left:70.0px;top:187.6px;font-size:21.45px;line-height:21.45px;letter-spacing:0.579px;color:#8f99a8;">Home</div>
<div class="t" style="left:84.0px;top:322.6px;font-size:21.45px;line-height:21.45px;letter-spacing:0.800px;transform:scaleX(1.0294);transform-origin:1.0px 0;color:#8f99a8;">Me</div>
<div class="t" style="left:72.0px;top:457.4px;font-size:21.45px;line-height:21.45px;letter-spacing:0.319px;color:#8f99a8;">Inbox</div>
<div class="t" style="left:56.0px;top:592.4px;font-size:21.45px;line-height:21.45px;letter-spacing:0.101px;color:#8f99a8;">My Team</div>
<div class="t" style="left:38.4px;top:726.8px;font-size:21.45px;line-height:21.45px;letter-spacing:0.120px;color:#8f99a8;">My Finances</div>
<div class="t" style="left:80.8px;top:862.0px;font-size:21.45px;line-height:21.45px;letter-spacing:0.800px;transform:scaleX(1.0222);transform-origin:1.0px 0;color:#8f99a8;">Org</div>
<div class="t" style="left:63.0px;top:997.1px;font-size:21.45px;line-height:21.45px;letter-spacing:0.002px;color:#8f99a8;">Engage</div>
<div class="t" style="left:79.0px;top:1131.6px;font-size:21.45px;line-height:21.45px;letter-spacing:0.739px;color:#8f99a8;">Hire</div>
<div class="t" style="left:37.9px;top:1266.9px;font-size:21.45px;line-height:21.45px;letter-spacing:0.165px;color:#ffffff;">Performance</div>
<div class="t" style="left:65.3px;top:1410.0px;font-size:21.45px;line-height:21.45px;letter-spacing:0.223px;color:#8f99a8;">Project</div>
<div class="t" style="left:40.7px;top:1544.5px;font-size:21.45px;line-height:21.45px;letter-spacing:0.345px;color:#8f99a8;">Time Attend</div>
<div class="t" style="left:116.9px;top:383.4px;font-size:21.59px;line-height:21.59px;letter-spacing:0.000px;transform:scaleX(0.8086);transform-origin:1.0px 0;color:#ffffff;">1141</div>
<div class="t ns" style="left:280.4px;top:1022.7px;font-size:25.22px;line-height:25.22px;letter-spacing:0.000px;transform:scaleX(0.9723);transform-origin:2.0px 0;color:#ffffff;">BG</div>
<div class="t ns" style="left:280.3px;top:1136.7px;font-size:25.22px;line-height:25.22px;letter-spacing:0.000px;transform:scaleX(0.9934);transform-origin:2.0px 0;color:#ffffff;">BK</div>
<div class="t ns" style="left:289.0px;top:1250.7px;font-size:25.22px;line-height:25.22px;letter-spacing:0.000px;color:#ffffff;">B</div>
<div class="t ns" style="left:285.9px;top:1364.7px;font-size:25.22px;line-height:25.22px;letter-spacing:0.000px;color:#ffffff;">D.</div>
<div class="t ns" style="left:280.5px;top:1478.7px;font-size:25.22px;line-height:25.22px;letter-spacing:0.000px;transform:scaleX(0.9642);transform-origin:1.0px 0;color:#ffffff;">GT</div>
<div class="t ns" style="left:850.3px;top:878.7px;font-size:35.36px;line-height:35.36px;letter-spacing:0.000px;transform:scaleX(0.9381);transform-origin:2.0px 0;color:#ffffff;">BG</div>
</body></html>
